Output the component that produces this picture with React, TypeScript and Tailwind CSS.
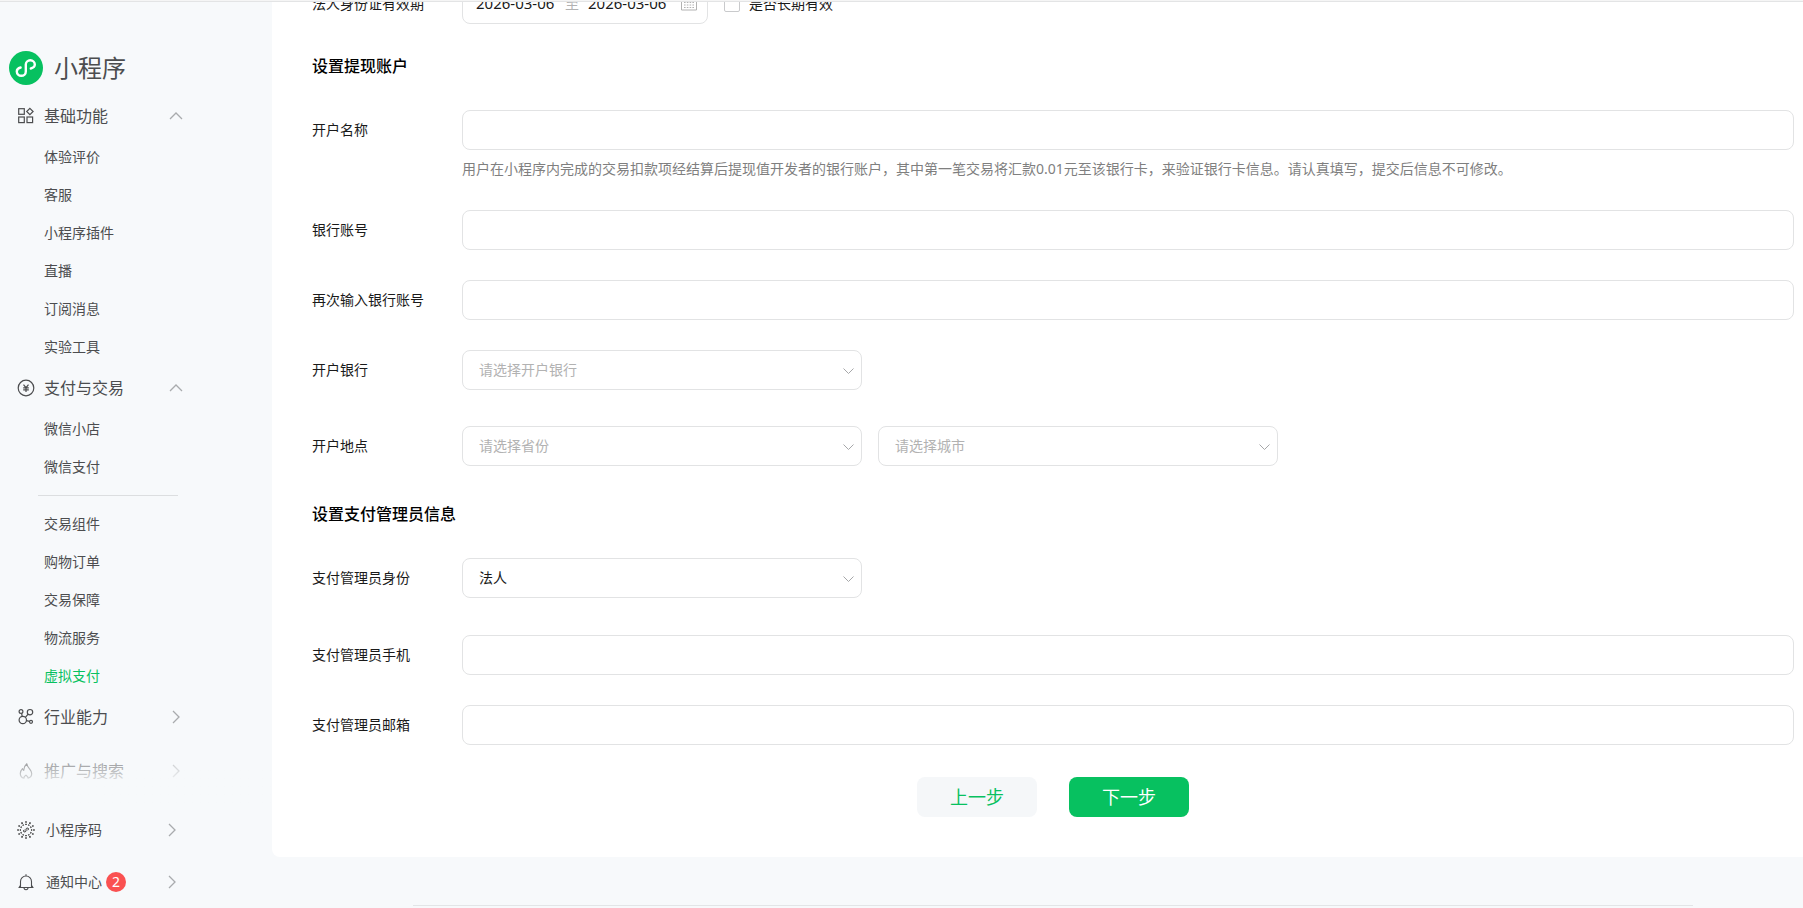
import { useState } from "react";
import type { ReactNode } from "react";
import clsx from "clsx";

/* ── Menu data ───────────────────────────────────────────── */
type Group = {
  id: string;
  label: string;
  icon: ReactNode;
  items: string[];
  dividerAfter?: string;
};

const GROUPS: Group[] = [
  {
    id: "basic",
    label: "基础功能",
    icon: <GridIcon />,
    items: ["体验评价", "客服", "小程序插件", "直播", "订阅消息", "实验工具"],
  },
  {
    id: "pay",
    label: "支付与交易",
    icon: <YuanIcon />,
    items: ["微信小店", "微信支付", "交易组件", "购物订单", "交易保障", "物流服务", "虚拟支付"],
    dividerAfter: "微信支付",
  },
  { id: "industry", label: "行业能力", icon: <NodesIcon />, items: [] },
  { id: "promote", label: "推广与搜索", icon: <FlameIcon />, items: [] },
];

const ACTIVE = "虚拟支付";

export default function App() {
  return (
    <div className="flex h-screen flex-col overflow-hidden bg-[#f7f9fb] font-['Noto_Sans','Noto_Sans_CJK_SC',sans-serif] text-sm text-[#1a1a1a]">
      <div className="h-[2px] shrink-0 border-b border-[#e3e4e5] bg-[#f5f5f5]" />
      <div className="flex min-h-0 flex-1 overflow-hidden">
        <Sidebar />
        <Main />
      </div>
    </div>
  );
}

/* ── Sidebar ─────────────────────────────────────────────── */
function Sidebar() {
  return (
    <aside className="flex w-[272px] shrink-0 flex-col text-[#4c4d4f]">
      <a href="#home" className="mt-12 flex items-center gap-[11px] pl-[9px]">
        <LogoIcon />
        <span className="text-2xl leading-9">小程序</span>
      </a>

      <nav className="relative mt-2 min-h-0 flex-1 overflow-hidden">
        {GROUPS.map((group) => (
          <MenuGroup key={group.id} group={group} />
        ))}
        <div className="pointer-events-none absolute inset-x-0 bottom-0 h-16 bg-linear-to-b from-[#f7f9fb]/0 to-[#f7f9fb] to-75%" />
      </nav>

      <div>
        <FootLink icon={<CodeIcon />} label="小程序码" />
        <FootLink icon={<BellIcon />} label="通知中心" badge={2} />
      </div>
    </aside>
  );
}

function MenuGroup({ group }: { group: Group }) {
  const [open, setOpen] = useState(group.items.length > 0);

  return (
    <section className={clsx(group.items.length === 0 && "mb-2.5")}>
      <button
        type="button"
        onClick={() => setOpen(!open)}
        className="flex h-11 w-[183px] items-center pl-[17px] text-base"
      >
        {group.icon}
        <span className="ml-[9px]">{group.label}</span>
        <Chevron className={clsx("ml-auto", open ? "-rotate-90" : "rotate-0")} />
      </button>
      {open && (
        <ul>
          {group.items.map((item) => (
            <li key={item}>
              <a
                href="#menu"
                className={clsx("flex h-[38px] items-center pl-11", item === ACTIVE && "text-[#07c160]")}
              >
                {item}
              </a>
              {item === group.dividerAfter && (
                <hr className="mt-[9px] mb-[9px] ml-[38px] w-[140px] border-[#dcdee0]" />
              )}
            </li>
          ))}
        </ul>
      )}
    </section>
  );
}

function FootLink({ icon, label, badge }: { icon: ReactNode; label: string; badge?: number }) {
  return (
    <a href="#foot" className="flex h-[52px] w-[179px] items-center pl-[17px]">
      {icon}
      <span className="ml-[11px]">{label}</span>
      {badge && (
        <span className="ml-1 flex size-5 items-center justify-center rounded-full bg-[#fa5151] text-white">
          {badge}
        </span>
      )}
      <Chevron className="ml-auto" />
    </a>
  );
}

/* ── Main ────────────────────────────────────────────────── */
function Main() {
  return (
    <main className="-mr-[31px] min-w-0 flex-1">
      <form className="-mt-[18px] rounded-b-lg bg-white px-10 pb-10">
        <Row label="法人身份证有效期" htmlFor="id-start">
          <div className="flex h-10 items-center">
            <div className="flex h-10 w-[246px] items-center rounded-lg border border-[#e2e3e4] pr-2.5 pl-[13px]">
              <input id="id-start" defaultValue="2026-03-06" className="w-20 text-[15px] outline-none" />
              <span className="mx-[9px] text-[#b2b2b2]">至</span>
              <input
                aria-label="结束日期"
                defaultValue="2026-03-06"
                className="w-20 text-[15px] outline-none"
              />
              <CalendarIcon />
            </div>
            <label className="ml-4 flex items-center gap-[9px]">
              <input
                type="checkbox"
                className="size-4 appearance-none rounded-xs border border-[#c9cacc] checked:bg-[#07c160]"
              />
              是否长期有效
            </label>
          </div>
        </Row>

        <Heading>设置提现账户</Heading>
        <Row label="开户名称" htmlFor="account-name">
          <TextInput id="account-name" />
          <p className="mt-2 leading-[22px] text-[#7f7f7f]">
            用户在小程序内完成的交易扣款项经结算后提现值开发者的银行账户，其中第一笔交易将汇款0.01元至该银行卡，来验证银行卡信息。请认真填写，提交后信息不可修改。
          </p>
        </Row>
        <Row label="银行账号" htmlFor="account-no">
          <TextInput id="account-no" />
        </Row>
        <Row label="再次输入银行账号" htmlFor="account-no-again">
          <TextInput id="account-no-again" />
        </Row>
        <Row label="开户银行" htmlFor="bank" className="mb-9">
          <Select id="bank" placeholder="请选择开户银行" />
        </Row>
        <Row label="开户地点" htmlFor="province" className="mb-9">
          <div className="flex gap-4">
            <Select id="province" placeholder="请选择省份" />
            <Select id="city" placeholder="请选择城市" ariaLabel="开户城市" />
          </div>
        </Row>

        <Heading>设置支付管理员信息</Heading>
        <Row label="支付管理员身份" htmlFor="admin-role" className="mb-[37px]">
          <Select id="admin-role" options={["法人"]} />
        </Row>
        <Row label="支付管理员手机" htmlFor="admin-phone">
          <TextInput id="admin-phone" type="tel" />
        </Row>
        <Row label="支付管理员邮箱" htmlFor="admin-mail" className="mb-8">
          <TextInput id="admin-mail" type="email" />
        </Row>

        <div className="flex justify-center gap-8 text-lg">
          <button type="button" className="h-10 w-[120px] rounded-lg bg-[#f5f7f9] text-[#07c160]">
            上一步
          </button>
          <button type="button" className="h-10 w-[120px] rounded-lg bg-[#07c160] text-white">
            下一步
          </button>
        </div>
      </form>
      <footer className="mx-auto mt-12 h-20 w-[1280px] border-t border-[#e3e5e7]" />
    </main>
  );
}

function Heading({ children }: { children: ReactNode }) {
  return <h3 className="mb-8 text-base leading-6 font-medium text-black">{children}</h3>;
}

function Row({
  label, htmlFor, className = "mb-[30px]", children,
}: {
  label: string; htmlFor: string; className?: string; children: ReactNode;
}) {
  return (
    <div className={clsx("flex", className)}>
      <label htmlFor={htmlFor} className="w-[150px] shrink-0 leading-10">{label}</label>
      <div className="min-w-0 flex-1">{children}</div>
    </div>
  );
}

function TextInput({ id, type = "text" }: { id: string; type?: string }) {
  return (
    <input
      id={id}
      type={type}
      className="block h-10 w-full rounded-lg border border-[#e2e3e4] px-4 outline-none focus:border-[#07c160]"
    />
  );
}

function Select({
  id, placeholder, options = [], ariaLabel,
}: {
  id: string; placeholder?: string; options?: string[]; ariaLabel?: string;
}) {
  return (
    <div className="relative w-[400px]">
      <select
        id={id}
        aria-label={ariaLabel}
        className={clsx(
          "block h-10 w-full appearance-none rounded-lg border border-[#e2e3e4] bg-white px-4 outline-none",
          placeholder && "text-[#b2b2b2]",
        )}
      >
        {placeholder && <option value="">{placeholder}</option>}
        {options.map((o) => (
          <option key={o}>{o}</option>
        ))}
      </select>
      <svg className="pointer-events-none absolute top-[18px] right-2 h-[6px] w-[11px]" viewBox="0 0 11 6" fill="none">
        <path d="M.5.5l5 5 5-5" stroke="#a6a7a9" />
      </svg>
    </div>
  );
}

/* ── Icons ───────────────────────────────────────────────── */
function Chevron({ className }: { className?: string }) {
  return (
    <svg className={clsx("size-[14px]", className)} viewBox="0 0 14 14" fill="none">
      <path d="M4 1l6 6-6 6" stroke="#a9abad" strokeWidth="1.3" />
    </svg>
  );
}

function LogoIcon() {
  return (
    <svg className="size-[34px]" viewBox="0 0 34 34" fill="none">
      <circle cx="17" cy="17" r="17" fill="#07c160" />
      <path
        d="M21.8 17.500c2.400-.5 4-2 4-3.900 0-2.500-2-4.300-4.500-4.300s-4.500 1.900-4.500 4.300v6.800c0 2.500-2 4.400-4.500 4.400s-4.500-1.800-4.500-4.300c0-2 1.500-3.400 3.800-4"
        stroke="#fff"
        strokeWidth="2.400"
        strokeLinecap="round"
      />
    </svg>
  );
}

function GridIcon() {
  return (
    <svg className="size-[18px]" viewBox="0 0 18 18" fill="none" stroke="currentColor" strokeWidth="1.2">
      <rect x="1.700" y="1.700" width="5.600" height="5.600" />
      <rect x="1.700" y="10" width="5.600" height="5.600" />
      <rect x="10" y="10" width="5.600" height="5.600" />
      <path d="M12.900 1.300l3.200 3.200-3.200 3.200-3.200-3.200z" />
    </svg>
  );
}

function YuanIcon() {
  return (
    <svg className="size-[18px]" viewBox="0 0 18 18" fill="none" stroke="currentColor" strokeWidth="1.200">
      <circle cx="9" cy="9" r="7.800" />
      <path d="M6.500 5.700L9 8.700l2.500-3M9 8.700v4.200M6.200 8.800h5.600M6.200 10.800h5.600" />
    </svg>
  );
}

function NodesIcon() {
  return (
    <svg className="size-[18px]" viewBox="0 0 18 18" fill="none" stroke="currentColor" strokeWidth="1.200">
      <circle cx="4" cy="3.500" r="1.900" />
      <circle cx="13" cy="4.200" r="2.700" />
      <circle cx="5.800" cy="12" r="3.700" />
      <circle cx="14" cy="13.800" r="1.500" />
      <path d="M4.600 5.300l.6 3M11.100 6.200L8.400 9.300M9.500 12.700l3 .7" />
    </svg>
  );
}

function FlameIcon() {
  return (
    <svg className="size-[18px]" viewBox="0 0 18 18" fill="none" stroke="currentColor" strokeWidth="1.200" strokeLinejoin="round">
      <path d="M7 16.200C4.600 15.600 3.300 13.700 3.300 11.400c0-2 .9-3.300 2.200-4.700.3 1 .6 1.400 1.200 1.700.2-2.700 1.200-5 3.100-6.600.2 2.300 1.400 3.700 2.700 5.100.9 1.200 2.200 2.500 2.200 4.600 0 2.400-1.400 4.200-3.700 4.700.2-1.200-.6-2.200-2-3-1.500.8-2.200 1.800-2 3z" />
    </svg>
  );
}

function CodeIcon() {
  return (
    <svg className="size-[18px]" viewBox="0 0 18 18" fill="none" stroke="#2b2b2b">
      {[0, 30, 60, 90, 120, 150, 180, 210, 240, 270, 300, 330].map((deg) => (
        <path key={deg} d="M9 .3v1.500M9 2.800v1.200" strokeWidth="1.500" transform={`rotate(${deg} 9 9)`} />
      ))}
      <path
        d="M10.500 9c.7-.1 1.100-.5 1.100-1s-.5-.9-1.100-.9S9 7.500 9 8.200v1.600c0 .7-.7 1.100-1.400 1.100s-1.200-.4-1.200-.9.400-.9 1.100-1"
        strokeWidth="1"
      />
    </svg>
  );
}

function BellIcon() {
  return (
    <svg className="size-[18px]" viewBox="0 0 18 18" fill="none" stroke="currentColor" strokeWidth="1.100">
      <path d="M1.500 14.500h15M3.500 14.200V8.500a5.500 5.500 0 0 1 11 0v5.700M3.500 12.300l-1.400 2.200M14.500 12.300l1.400 2.200M7 14.800a2 1.900 0 0 0 4 0M9 1.200v1.800" />
    </svg>
  );
}

function CalendarIcon() {
  return (
    <svg className="ml-auto size-4" viewBox="0 0 16 16" fill="none" stroke="#b2b2b2">
      <path d="M.5 1.500h15v12.500H.5zM4.500 0v3M11.500 0v3" />
      <path d="M3 6.500h10M3 9h10M3 11.500h10" strokeDasharray="1.600 1.200" />
    </svg>
  );
}
